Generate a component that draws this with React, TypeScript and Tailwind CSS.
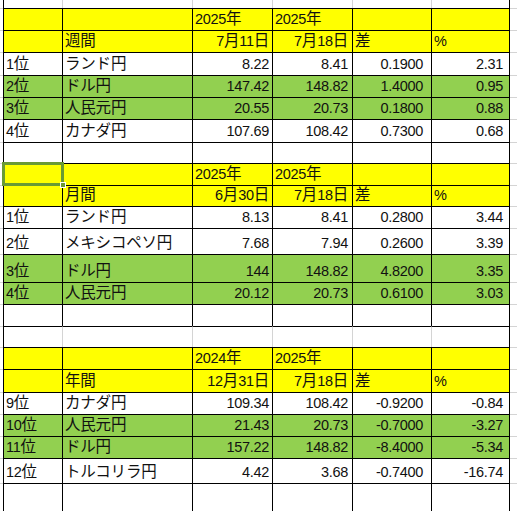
import React from "react";
import clsx from "clsx";

type Row = {
  h: string;
  bg?: string;
  kind?: "top" | "gray" | "plain";
  sel?: boolean;
  c?: string[];
};

const Y = "bg-[#ffff00]";
const G = "bg-[#92d050]";
const E = ["", "", "", "", "", ""];

const rows: Row[] = [
  { h: "h-[8px]", kind: "top" },
  { h: "h-[22px]", bg: Y, c: ["", "", "2025年", "2025年", "", ""] },
  { h: "h-[22px]", bg: Y, c: ["", "週間", "7月11日", "7月18日", "差", "%"] },
  { h: "h-[23px]", c: ["1位", "ランド円", "8.22", "8.41", "0.1900", "2.31"] },
  { h: "h-[22px]", bg: G, c: ["2位", "ドル円", "147.42", "148.82", "1.4000", "0.95"] },
  { h: "h-[22px]", bg: G, c: ["3位", "人民元円", "20.55", "20.73", "0.1800", "0.88"] },
  { h: "h-[23px]", c: ["4位", "カナダ円", "107.69", "108.42", "0.7300", "0.68"] },
  { h: "h-[21px]", c: E },
  { h: "h-[22px]", bg: Y, sel: true, c: ["", "", "2025年", "2025年", "", ""] },
  { h: "h-[21px]", bg: Y, c: ["", "月間", "6月30日", "7月18日", "差", "%"] },
  { h: "h-[22px]", c: ["1位", "ランド円", "8.13", "8.41", "0.2800", "3.44"] },
  { h: "h-[26px]", c: ["2位", "メキシコペソ円", "7.68", "7.94", "0.2600", "3.39"] },
  { h: "h-[28px]", bg: G, c: ["3位", "ドル円", "144", "148.82", "4.8200", "3.35"] },
  { h: "h-[22px]", bg: G, c: ["4位", "人民元円", "20.12", "20.73", "0.6100", "3.03"] },
  { h: "h-[22px]", c: E },
  { h: "h-[21px]", kind: "gray" },
  { h: "h-[22px]", bg: Y, c: ["", "", "2024年", "2025年", "", ""] },
  { h: "h-[23px]", bg: Y, c: ["", "年間", "12月31日", "7月18日", "差", "%"] },
  { h: "h-[22px]", c: ["9位", "カナダ円", "109.34", "108.42", "-0.9200", "-0.84"] },
  { h: "h-[22px]", bg: G, c: ["10位", "人民元円", "21.43", "20.73", "-0.7000", "-3.27"] },
  { h: "h-[22px]", bg: G, c: ["11位", "ドル円", "157.22", "148.82", "-8.4000", "-5.34"] },
  { h: "h-[25px]", c: ["12位", "トルコリラ円", "4.42", "3.68", "-0.7400", "-16.74"] },
  { h: "h-[28px]", kind: "plain" },
];

const widths = ["w-[59px]", "w-[130px]", "w-[80px]", "w-[80px]", "w-[79px]", "w-[79px]"];
const padRight = ["", "", "pr-[3px]", "pr-[4px]", "pr-[8px]", "pr-[6px]"];

function isLeft(col: number, text: string) {
  if (col < 2) return true;
  if (text.endsWith("年")) return true;
  return text === "差" || text === "%";
}

// japanese chars a little bigger than digits, like the sheet font
function Txt({ t }: { t: string }) {
  const parts = t.split(/([^\x00-\x7f]+)/).filter(Boolean);
  return (
    <>
      {parts.map((p, k) =>
        /[^\x00-\x7f]/.test(p) ? (
          <span key={k} className="text-[15.5px] tracking-[-0.2px]">
            {p}
          </span>
        ) : (
          <span key={k}>{p}</span>
        )
      )}
    </>
  );
}

export default function App() {
  return (
    <div
      className="w-[517px] h-[511px] overflow-hidden bg-white text-[14.5px] leading-[16px] text-[#111] tracking-[-0.3px]"
      style={{ fontFamily: '"Liberation Sans", "Noto Sans CJK JP", sans-serif' }}
    >
      {rows.map((r, i) => {
        const top = r.kind === "top";
        const gray = r.kind === "gray" || top;
        const cells = r.c ?? E;
        return (
          <div key={i} className={clsx("flex", r.h)}>
            {/*left gutter*/}
            <div className={clsx("w-[3px] shrink-0", !top && "border-t border-[#d4d4d4]")} />
            {cells.map((t, j) => {
              const left = isLeft(j, t);
              return (
                <div
                  key={j}
                  className={clsx(
                    "relative flex items-end pb-[3px] shrink-0 whitespace-nowrap border-l",
                    widths[j],
                    r.bg,
                    left ? "justify-start pl-[2px]" : clsx("justify-end", padRight[j]),
                    !top && "border-t border-t-black",
                    j === 5 && "border-r border-r-black",
                    gray && j > 0 ? "border-l-[#d4d4d4]" : "border-l-black",
                    top && "border-l-[#d4d4d4] border-r-[#d4d4d4]"
                  )}
                >
                  <Txt t={t} />
                  {r.sel && j === 0 && (
                    <div className="absolute z-10 -top-[2px] -left-[2px] w-[62px] h-[24px] border-[3px] border-solid border-[#6a9a35]">
                      <div className="absolute -bottom-[5px] -right-[5px] w-[6px] h-[6px] bg-[#6a9a35] border border-solid border-white" />
                    </div>
                  )}
                </div>
              );
            })}
            {/*right gutter*/}
            <div className={clsx("flex-1", !top && "border-t border-[#d4d4d4]")} />
          </div>
        );
      })}
    </div>
  );
}
